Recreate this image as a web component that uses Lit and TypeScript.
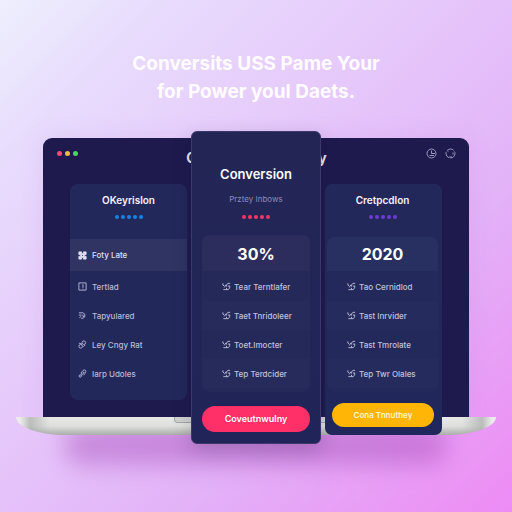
import { LitElement, html, css, svg } from "lit";
import { customElement, property } from "lit/decorators.js";

const leftIcons = [
  svg`<path d="M1 1h3v2h2V1h3v3H7v2h2v3H6V7H4v2H1V6h2V4H1z" fill="currentColor"/><path d="M4.500 5h1" stroke="#2f3463"/>`,
  svg`<path d="M1 1h8v8H1zM5.500 2.500v4M5.500 7.500v1"/>`,
  svg`<path d="M1 2h4.500a3 3 0 1 1-2 6M1 4.500h3M5.500 4v2h2M1.500 7.500l2-1.500"/>`,
  svg`<circle cx="6.500" cy="3" r="2"/><circle cx="3" cy="7" r="2"/><path d="M1 3.500l3.500 1M6 7.500l2-2"/>`,
  svg`<circle cx="7" cy="2.700" r="1.700"/><circle cx="2.500" cy="7.800" r="1.300"/><path d="M3.500 7l3-2.500M4 3l-.5 3M6 7l2-2"/>`,
];
const checkIcon = svg`<path d="M1 1.500v2l1.500 1M4.500 3L2.500 6M1.500 8.500H5M9 1.500H6.500L5 3.500v1.500M9 4.500H6.500M8.500 4.500v2L7 8.500H5V6.500"/>`;

const icon = (shape: unknown) =>
  html`<svg class="icon" viewBox="0 0 10 10" aria-hidden="true">${shape}</svg>`;

const menu = ["Foty Late", "Tertlad", "Tapyulared", "Ley Cngy Rat", "Iarp Udoles"];

interface Plan {
  kind: string;
  title: string;
  note?: string;
  figure: string;
  items: string[];
  action: string;
}

const plans: Plan[] = [
  {
    kind: "main",
    title: "Conversion",
    note: "Prztey Inbows",
    figure: "30%",
    items: ["Tear Terntlafer", "Taet Tnridoleer", "Toet.Imocter", "Tep Terdcider"],
    action: "Coveutnwulny",
  },
  {
    kind: "side",
    title: "Cretpcdlon",
    figure: "2020",
    items: ["Tao Cernidlod", "Tast Inrvider", "Tast Tmrolate", "Tep Twr Olales"],
    action: "Cona Tnnuthey",
  },
];

@customElement("dot-row")
class DotRow extends LitElement {
  static styles = css`
    :host {
      display: flex;
      justify-content: center;
      gap: 2px;
      height: 4px;
    }
    .dot {
      width: 4px;
      height: 4px;
      border-radius: 2px;
      background: currentColor;
    }
  `;
  render() {
    return [0, 1, 2, 3, 4].map(() => html`<span class="dot"></span>`);
  }
}

@customElement("plan-card")
class PlanCard extends LitElement {
  @property({ attribute: false }) plan!: Plan;
  static styles = css`
    :host {
      display: block;
    }
    .card {
      box-sizing: border-box;
      display: flex;
      flex-direction: column;
      text-align: center;
    }
    .main {
      padding: 32px 10px 11px;
      border: 1px solid #3c396a;
      border-radius: 6px;
      background: linear-gradient(#232655, #202458);
      box-shadow: 0 8px 20px #1a103830;
    }
    .side {
      padding: 8px 4px 8px 2px;
      border-radius: 7px;
      background: linear-gradient(#23285a, #20275a);
    }
    h2 {
      margin: 0;
      font-size: 10px;
      line-height: 16px;
      font-weight: 600;
      color: #f3f2fb;
    }
    .main h2 {
      font-size: 13px;
      line-height: 20px;
      color: #fff;
    }
    .note {
      margin: 7px 0 0;
      font-size: 8px;
      line-height: 16px;
      color: #8d8cb8;
    }
    .dots {
      margin: 7px 0 16px;
      color: #6d3bd2;
    }
    .main .dots {
      margin-top: 8px;
      color: #fb3463;
    }
    .panel {
      border-radius: 7px;
      overflow: hidden;
      background: #25295a;
    }
    .side .panel {
      background: #23295b;
      margin-top: 2px;
    }
    .figure {
      margin: 0;
      font-size: 16px;
      line-height: 38px;
      height: 36px;
      font-weight: 700;
      color: #fff;
      background: #2c2d5d;
    }
    .side .figure {
      line-height: 34px;
      height: 34px;
      background: #282f61;
    }
    ul {
      margin: 0;
      padding: 1px 0 4px;
      list-style: none;
    }
    li {
      display: flex;
      align-items: center;
      gap: 3px;
      height: 29px;
      padding-left: 20px;
      font-size: 8px;
      font-weight: 500;
      color: #c1c1dc;
      white-space: nowrap;
    }
    li:nth-child(even) {
      background: #ffffff03;
    }
    .icon {
      width: 9px;
      height: 9px;
      flex: none;
      fill: none;
      stroke: currentColor;
    }
    button {
      margin: 14px 0 0;
      padding: 0;
      border: 0;
      border-radius: 13px;
      height: 26px;
      font: 600 9px/24px Inter, "Open Sans", sans-serif;
      color: #fff;
      background: #ff2f67;
      cursor: pointer;
    }
    .side button {
      margin: 11px 4px 0 5px;
      height: 24px;
      font-size: 8px;
      color: #fff6cf;
      background: #ffb505;
    }
  `;
  render() {
    const p = this.plan;
    return html`<article class="card ${p.kind}">
      <h2>${p.title}</h2>
      ${p.note ? html`<p class="note">${p.note}</p>` : ""}
      <dot-row class="dots"></dot-row>
      <div class="panel">
        <p class="figure">${p.figure}</p>
        <ul>
          ${p.items.map((t) => html`<li>${icon(checkIcon)}${t}</li>`)}
        </ul>
      </div>
      <button type="button">${p.action}</button>
    </article>`;
  }
}

@customElement("app-root")
class AppRoot extends LitElement {
  static styles = css`
    :host {
      display: block;
      box-sizing: border-box;
      min-height: 100vh;
      padding: 50px 16px 20px;
      font-family: Inter, "Open Sans", sans-serif;
      background: linear-gradient(135deg, #eeeffd 0%, #e8dcfd 16%, #e6c8fb 42%, #e3b2f8 68%, #ec92f5 94%, #ed8bf5 100%);
    }
    h1 {
      margin: 0 0 25px;
      font-size: 19px;
      line-height: 28px;
      font-weight: 700;
      text-align: center;
      color: #fffcff;
    }
    .line {
      display: block;
    }
    .stage {
      display: grid;
      isolation: isolate;
    }
    .laptop,
    .cards {
      grid-area: 1 / 1;
    }
    .laptop {
      display: flex;
      flex-direction: column;
      margin: 7px 0 9px;
    }
    .screen {
      flex: 1;
      display: grid;
      grid-template-columns: 1fr auto 1fr;
      align-content: start;
      box-sizing: border-box;
      margin: 0 27px;
      padding: 8px 13px 0 14px;
      border-radius: 9px 9px 0 0;
      background: #1e1a4e;
      box-shadow: 0 0 24px #a060c020;
    }
    .lights {
      display: flex;
      gap: 3px;
      padding-top: 5px;
    }
    .light {
      width: 5px;
      height: 5px;
      border-radius: 3px;
    }
    .red {
      background: #fb4777;
    }
    .amber {
      background: #eebd32;
    }
    .green {
      background: #4bd660;
    }
    .name {
      margin: 0;
      padding-top: 2px;
      font-size: 14px;
      line-height: 20px;
      font-weight: 700;
      color: #e6e4f4;
    }
    .tools {
      display: flex;
      justify-content: flex-end;
      align-items: flex-start;
      gap: 8px;
      padding-top: 2px;
    }
    .tool {
      padding: 0;
      border: 0;
      background: none;
      width: 11px;
      height: 11px;
      color: #9a96bd;
      cursor: pointer;
    }
    .tool svg {
      display: block;
      width: 11px;
      height: 11px;
      fill: none;
      stroke: currentColor;
    }
    .base {
      position: relative;
      height: 18px;
      border-radius: 0 0 50px 50px / 0 0 18px 18px;
      background:
        linear-gradient(90deg, #ececec 0, #ececec 4px, #a9aca9b0 14px, #dfe0df00 34px, #dfe0df00 calc(100% - 34px), #a9aca9b0 calc(100% - 14px), #ececec calc(100% - 4px), #ececec 100%),
        linear-gradient(#e6e7e6, #dfe0de 50%, #a9ada8);
    }
    .base::after {
      content: "";
      position: absolute;
      z-index: -1;
      inset: 8px 10% -30px;
      border-radius: 20px;
      background: #a548b8;
      opacity: 0.45;
      filter: blur(12px);
    }
    .notch {
      width: 162px;
      height: 5px;
      margin: 0 auto;
      border: 1px solid #a2a7a5;
      border-top: 0;
      border-radius: 0 0 4px 4px;
      background: #cfd2d0;
    }
    .cards {
      position: relative;
      display: grid;
      grid-template-columns: 117fr 130fr 117fr;
      gap: 4px;
      align-items: start;
      margin: 0 54px;
    }
    .low {
      margin-top: 53px;
    }
    .menu {
      box-sizing: border-box;
      padding: 8px 0 12px;
      border-radius: 8px;
      background: linear-gradient(#23285a, #22285a);
    }
    .menu h2 {
      margin: 0;
      font-size: 10px;
      line-height: 16px;
      font-weight: 600;
      text-align: center;
      color: #f3f2fb;
    }
    .dots {
      margin: 7px 0 20px;
      color: #1682e6;
    }
    .links {
      display: flex;
      flex-direction: column;
    }
    .link {
      display: flex;
      align-items: center;
      gap: 5px;
      height: 29px;
      padding-left: 8px;
      font-size: 8px;
      font-weight: 500;
      color: #b9bad7;
      text-decoration: none;
      white-space: nowrap;
    }
    .link:first-child {
      height: 32px;
      margin-bottom: 1px;
      color: #dfe0f2;
      background: #2f3463;
    }
    .icon {
      width: 9px;
      height: 9px;
      flex: none;
      fill: none;
      stroke: currentColor;
    }
  `;
  render() {
    return html`
      <h1>
        <span class="line">Conversits USS Pame Your</span>
        <span class="line">for Power youl Daets.</span>
      </h1>
      <main class="stage">
        <div class="laptop">
          <header class="screen">
            <div class="lights">
              <span class="light red"></span>
              <span class="light amber"></span>
              <span class="light green"></span>
            </div>
            <p class="name">Conversion Strategy</p>
            <div class="tools">
              <button class="tool" type="button" aria-label="History">
                <svg viewBox="0 0 11 11"><circle cx="5.500" cy="5.500" r="4.500" /><path d="M5.500 2.500v3H9M3.500 7.500H8" /></svg>
              </button>
              <button class="tool" type="button" aria-label="Account">
                <svg viewBox="0 0 11 11"><circle cx="5.500" cy="5.500" r="4.500" stroke-dasharray="7 1.500" /><path d="M3 2.500v1M8 4.500v2M4 9h3" /></svg>
              </button>
            </div>
          </header>
          <div class="base"><div class="notch"></div></div>
        </div>
        <div class="cards">
          <nav class="menu low">
            <h2>OKeyrislon</h2>
            <dot-row class="dots"></dot-row>
            <div class="links">
              ${menu.map((t, i) => html`<a class="link" href="#">${icon(leftIcons[i])}${t}</a>`)}
            </div>
          </nav>
          <plan-card .plan=${plans[0]}></plan-card>
          <plan-card class="low" .plan=${plans[1]}></plan-card>
        </div>
      </main>
    `;
  }
}
